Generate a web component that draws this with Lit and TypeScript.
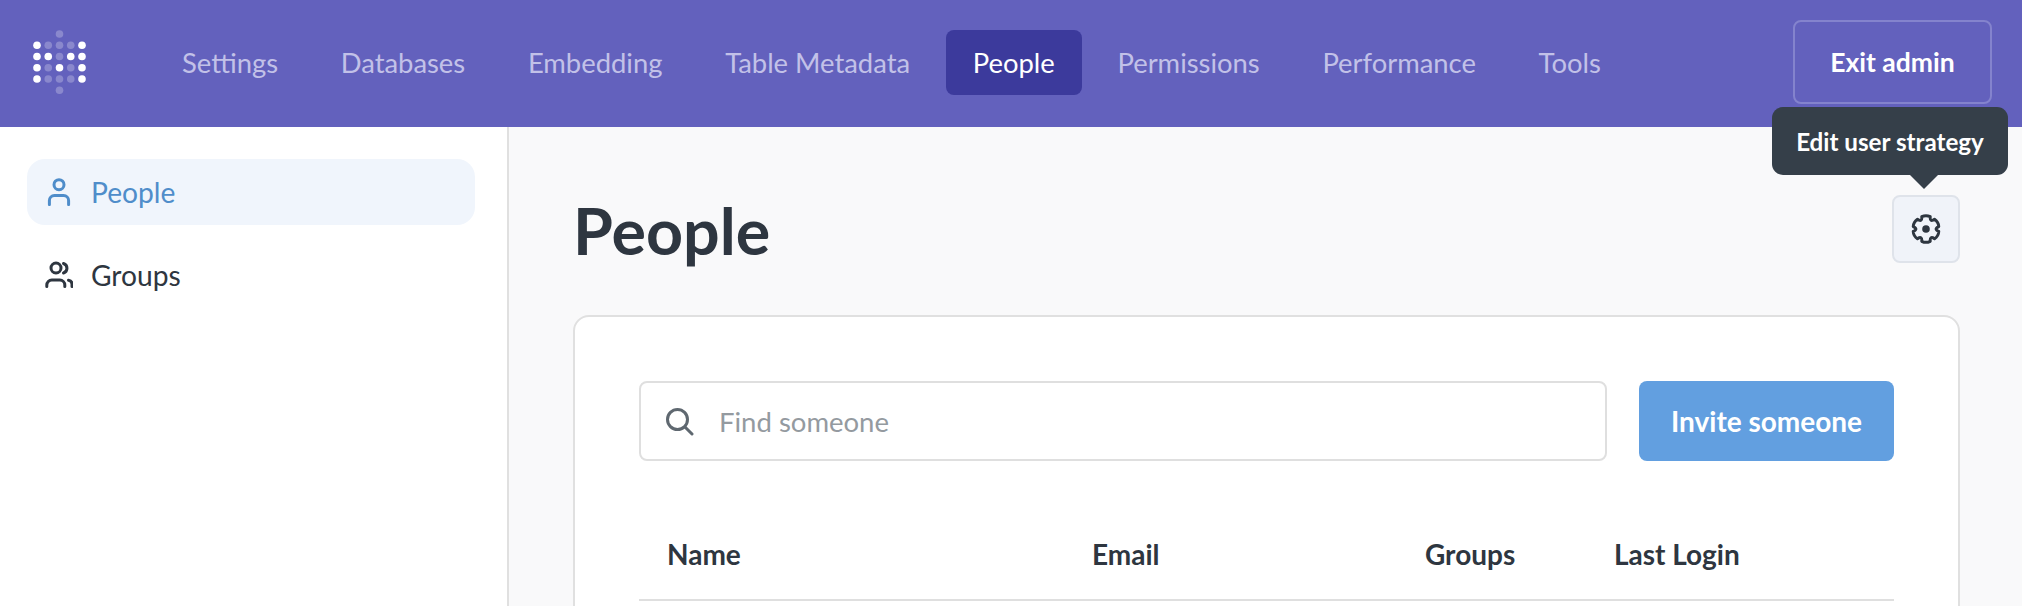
import { LitElement, html, css, svg } from 'lit';
import { customElement } from 'lit/decorators.js';

const NAV_ITEMS = ['Settings', 'Databases', 'Embedding', 'Table Metadata', 'People', 'Permissions', 'Performance', 'Tools'];

// logo dots, X = solid, o = faded
const LOGO_ROWS = [
    '..o..',
    'XoooX',
    'XXoXX',
    'XoXoX',
    'XoooX',
    '..o..',
];

// six lobes around the centre of a 30x30 box
function gearPath() {
    const pt = (deg: number, r: number) => {
        const a = (deg * Math.PI) / 180;
        return `${(15 + r * Math.cos(a)).toFixed(2)} ${(15 + r * Math.sin(a)).toFixed(2)}`;
    };
    let d = '';
    for (let k = 0; k < 6; k++) {
        const a = -90 + k * 60;
        d += `${k === 0 ? 'M' : 'L'}${pt(a - 19, 13)} Q${pt(a, 14.4)} ${pt(a + 19, 13)} Q${pt(a + 30, 7.5)} `;
        d += pt(a + 41, 13) + ' ';
    }
    return d + 'Z';
}

@customElement('app-root')
export class AppRoot extends LitElement {
    static styles = css`
        :host {
            display: block;
            height: 606px;
            overflow: hidden;
            font-family: 'Lato', sans-serif;
            color: #2e3640;
        }
        .nav {
            display: flex;
            align-items: center;
            height: 127px;
            padding: 0 30px 2px 33px;
            background: #6361bd;
            box-sizing: border-box;
        }
        .logo {
            width: 53px;
            height: 65px;
            margin-right: 69px;
            flex: none;
        }
        .links {
            display: flex;
            gap: 8.7px;
            flex: 1;
        }
        .link {
            padding: 0 27px;
            height: 65px;
            line-height: 65px;
            font-size: 27.4px;
            color: #c2c1e8;
            border-radius: 8px;
        }
        .link.active {
            background: #3c3a9c;
            color: #fff;
        }
        .exit {
            width: 199px;
            height: 84px;
            margin-top: -2px;
            box-sizing: border-box;
            border: 2px solid #8483cd;
            border-radius: 8px;
            display: flex;
            align-items: center;
            justify-content: center;
            color: #fff;
            font-size: 26.5px;
            font-weight: 700;
        }
        .body {
            display: flex;
            height: 479px;
        }
        .side {
            width: 509px;
            flex: none;
            box-sizing: border-box;
            border-right: 2px solid #e0e0e0;
            padding: 32px 32px 0 27px;
            background: #fff;
            display: flex;
            flex-direction: column;
            gap: 17px;
        }
        .side-item {
            display: flex;
            align-items: center;
            gap: 18px;
            height: 66px;
            padding-left: 18px;
            border-radius: 18px;
            font-size: 28.2px;
        }
        .side-item.active {
            background: #f0f5fc;
            color: #4f8dca;
        }
        .side-item svg {
            width: 28px;
            height: 28px;
            flex: none;
        }
        .main {
            flex: 1;
            background: #f9f9fa;
            padding: 0 62px 0 64px;
        }
        .head {
            display: flex;
            align-items: center;
            justify-content: space-between;
            height: 188px;
        }
        h1 {
            margin: 18px 0 0;
            font-size: 64.6px;
            font-weight: 700;
        }
        .gear-wrap {
            position: relative;
            margin-top: 16px;
        }
        .gear {
            width: 68px;
            height: 68px;
            box-sizing: border-box;
            border: 2px solid #dfe3ea;
            border-radius: 8px;
            background: #f0f3f9;
            display: flex;
            align-items: center;
            justify-content: center;
        }
        .gear svg {
            width: 30px;
            height: 30px;
        }
        .tip {
            position: absolute;
            right: -48px;
            bottom: 88px;
            width: 236px;
            height: 68px;
            box-sizing: border-box;
            background: #353f49;
            color: #fff;
            border-radius: 11px;
            font-size: 24.2px;
            font-weight: 700;
            display: flex;
            align-items: center;
            justify-content: center;
            white-space: nowrap;
        }
        .tip::after {
            content: '';
            position: absolute;
            top: 100%;
            left: 138px;
            border: 14px solid transparent;
            border-bottom: 0;
            border-top-color: #353f49;
        }
        .card {
            background: #fff;
            border: 2px solid #e0e0e0;
            border-radius: 16px;
            padding: 64px 64px 0;
            height: 400px;
            box-sizing: border-box;
        }
        .tools {
            display: flex;
            gap: 32px;
        }
        .search {
            flex: 1;
            height: 80px;
            box-sizing: border-box;
            border: 2px solid #dfdfdf;
            border-radius: 8px;
            display: flex;
            align-items: center;
            gap: 25px;
            padding-left: 24px;
            font-size: 27.5px;
            color: #949aa0;
        }
        .search svg {
            width: 29px;
            height: 29px;
            flex: none;
        }
        .invite {
            width: 255px;
            height: 80px;
            border-radius: 8px;
            background: #629fe0;
            color: #fff;
            font-size: 28px;
            font-weight: 700;
            display: flex;
            align-items: center;
            justify-content: center;
        }
        .thead {
            display: grid;
            grid-template-columns: 425px 333px 189px 1fr;
            margin-top: 59px;
            padding: 0 0 0 28px;
            height: 81px;
            box-sizing: border-box;
            border-bottom: 2px solid #dfdfdf;
            font-size: 28px;
            font-weight: 700;
            line-height: 68px;
        }
    `;

    render() {
        return html`
            <div class="nav">
                ${this._logo()}
                <div class="links">
                    ${NAV_ITEMS.map(item => html`<div class="link ${item === 'People' ? 'active' : ''}">${item}</div>`)}
                </div>
                <div class="exit">Exit admin</div>
            </div>
            <div class="body">
                <div class="side">
                    <div class="side-item active">
                        <svg viewBox="0 0 28 28" fill="none" stroke="currentColor" stroke-width="3" stroke-linecap="round">
                            <circle cx="14" cy="6.7" r="5"></circle>
                            <path d="M4.4 26.6v-4a5 5 0 0 1 5-5h9.200a5 5 0 0 1 5 5v4"></path>
                        </svg>
                        People
                    </div>
                    <div class="side-item">
                        <svg viewBox="0 0 28 28" fill="none" stroke="currentColor" stroke-width="3" stroke-linecap="round">
                            <circle cx="11" cy="7" r="5"></circle>
                            <path d="M1.800 25.500v-1.500a5 5 0 0 1 5-5h8a5 5 0 0 1 5 5v1.500"></path>
                            <path d="M18.500 2.500a5 5 0 0 1 0 9.500"></path>
                            <path d="M23.500 19.200a4 4 0 0 1 3.500 4v2.300"></path>
                        </svg>
                        Groups
                    </div>
                </div>
                <div class="main">
                    <div class="head">
                        <h1>People</h1>
                        <div class="gear-wrap">
                            <div class="tip">Edit user strategy</div>
                            <div class="gear">
                                <svg viewBox="0 0 30 30" fill="none" stroke="#2e3640" stroke-width="3" stroke-linejoin="round">
                                    <path d=${gearPath()}></path>
                                    <circle cx="15" cy="15" r="3.800" fill="#2e3640" stroke="none"></circle>
                                </svg>
                            </div>
                        </div>
                    </div>
                    <div class="card">
                        <div class="tools">
                            <div class="search">
                                <svg viewBox="0 0 29 29" fill="none" stroke="#5f6870" stroke-width="3" stroke-linecap="round">
                                    <circle cx="12.500" cy="12.500" r="10"></circle>
                                    <path d="M20 20l7 7"></path>
                                </svg>
                                Find someone
                            </div>
                            <div class="invite">Invite someone</div>
                        </div>
                        <div class="thead">
                            <div>Name</div>
                            <div>Email</div>
                            <div>Groups</div>
                            <div>Last Login</div>
                        </div>
                    </div>
                </div>
            </div>
        `;
    }

    private _logo() {
        return html`
            <svg class="logo" viewBox="0 0 53 65">
                ${LOGO_ROWS.map((row, r) => row.split('').map((c, i) => c === '.' ? null : svg`
                    <circle cx=${4 + i * 11.25} cy=${4 + r * 11.25} r="3.800" fill="#fff" opacity=${c === 'X' ? 1 : 0.25}></circle>
                `))}
            </svg>
        `;
    }
}
